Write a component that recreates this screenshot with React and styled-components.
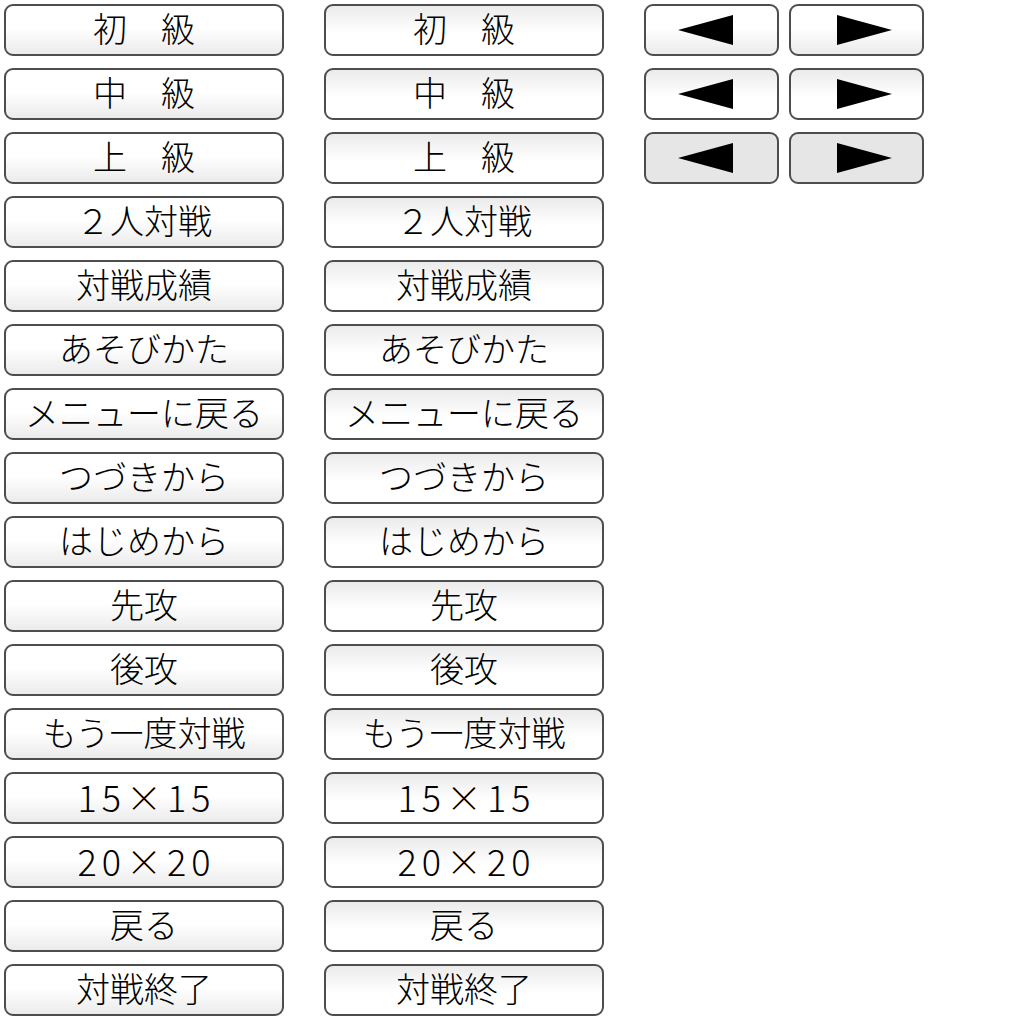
import React from 'react';
import styled, { createGlobalStyle, css } from 'styled-components';

const GlobalStyle = createGlobalStyle`
  body {
    margin: 0;
    background: #ffffff;
    font-family: "Noto Sans CJK JP", "Noto Sans", sans-serif;
  }
`;

const Sheet = styled.div`
  display: flex;
  gap: 40px;
  padding: 4px;
  align-items: flex-start;
`;

const Column = styled.div`
  display: flex;
  flex-direction: column;
  gap: 12px;
  width: 280px;
`;

const ArrowRow = styled.div`
  display: flex;
  gap: 10px;
`;

const faces = {
  up: css`
    background: linear-gradient(to bottom, #ffffff 0%, #ffffff 45%, #ebebeb 100%);
  `,
  down: css`
    background: linear-gradient(to bottom, #ebebeb 0%, #ffffff 55%, #ffffff 100%);
  `,
  off: css`
    background: #e6e6e6;
  `,
};

const Button = styled.div`
  box-sizing: border-box;
  height: 52px;
  width: ${(p) => p.$width || 280}px;
  padding-bottom: ${(p) => (p.$width ? 0 : 4)}px;
  border: 2px solid #4d4d4d;
  border-radius: 9px;
  display: flex;
  align-items: center;
  justify-content: center;
  color: #000;
  font-size: 34px;
  font-weight: 300;
  line-height: 1;
  white-space: nowrap;
  ${(p) => faces[p.$face]}
`;

const Wide = styled.span`
  font-size: 36px;
  letter-spacing: 5px;
  margin-right: -5px;
`;

const Arrow = styled.svg`
  width: 55px;
  height: 30px;
  display: block;
  margin-left: ${(p) => (p.$dir === 'right' ? 16 : 0)}px;
  margin-right: ${(p) => (p.$dir === 'left' ? 12 : 0)}px;
`;

const labels = [
  '初\u3000級',
  '中\u3000級',
  '上\u3000級',
  '２人対戦',
  '対戦成績',
  'あそびかた',
  'メニューに戻る',
  'つづきから',
  'はじめから',
  '先攻',
  '後攻',
  'もう一度対戦',
  '15×15',
  '20×20',
  '戻る',
  '対戦終了',
];

function Label({ text }) {
  return /^\d/.test(text) ? <Wide>{text}</Wide> : text;
}

function ArrowButton({ dir, face }) {
  return (
    <Button $face={face} $width={135}>
      <Arrow $dir={dir} viewBox="0 0 55 30">
        {dir === 'left'
          ? <polygon points="0,15 55,0 55,30" fill="#000" />
          : <polygon points="0,0 55,15 0,30" fill="#000" />}
      </Arrow>
    </Button>
  );
}

export default function App() {
  return (
    <>
      <GlobalStyle />
      <Sheet>
        <Column>
          {labels.map((t) => <Button key={t} $face="up"><Label text={t} /></Button>)}
        </Column>
        <Column>
          {labels.map((t) => <Button key={t} $face="down"><Label text={t} /></Button>)}
        </Column>
        <Column>
          {['up', 'down', 'off'].map((f) => (
            <ArrowRow key={f}>
              <ArrowButton dir="left" face={f} />
              <ArrowButton dir="right" face={f} />
            </ArrowRow>
          ))}
        </Column>
      </Sheet>
    </>
  );
}
